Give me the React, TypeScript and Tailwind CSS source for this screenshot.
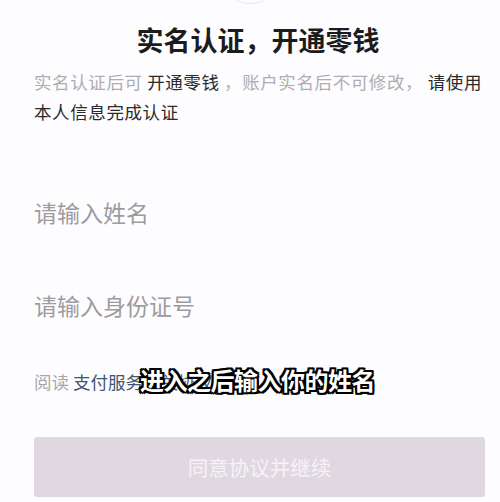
import React from 'react'

const font = { fontFamily: '"Noto Sans CJK SC", "Noto Sans", sans-serif' }

export default function App() {
  return (
    <div className="relative w-[500px] h-[502px] overflow-hidden bg-[#fdfcfe]" style={font}>
      {/* avatar edge peeking from top */}
      <div className="mx-auto mt-[-62px] w-[66px] h-[66px] rounded-full border border-[#ebe8ec] bg-[#fdfcfe]" />

      <div className="px-[34px]">
        <h1 className="mt-[16px] text-center text-[27px] leading-[40px] font-bold text-[#1c1c1c] pl-[16px]">
          实名认证，开通零钱
        </h1>

        <p className="mt-[7px] -mr-[20px] text-[17.5px] leading-[30px] tracking-[0.6px] text-[#b0adb1]">
          实名认证后可 <span className="text-[#2a2a2a]">开通零钱</span> ，账户实名后不可修改，{' '}
          <span className="text-[#2a2a2a]">请使用本人信息完成认证</span>
        </p>

        <div className="mt-[39px] flex flex-col">
          <div className="h-[93px] flex items-center text-[23px] text-[#9d9b9e]">请输入姓名</div>
          <div className="h-[93px] flex items-center text-[23px] text-[#9d9b9e]">请输入身份证号</div>
        </div>

        <div className="mt-[18px] text-[17.5px] leading-[24px]">
          <span className="text-[#a9a6aa]">阅读 </span>
          <span className="text-[#3e5673]">支付服务相关协议</span>
        </div>
      </div>

      <div className="pl-[34px] pr-[15px]">
        <button className="mt-[43px] w-full h-[60px] rounded-[3px] bg-[#e0d8e1] text-[20.5px] text-[#f6f2f6]">
          同意协议并继续
        </button>
      </div>

      {/* video caption overlay */}
      <div className="absolute left-[140px] top-[364px] text-[24px] leading-[32px] font-bold text-white tracking-[-0.5px] [text-shadow:-2px_-2px_0_#000,2px_-2px_0_#000,-2px_2px_0_#000,2px_2px_0_#000,0_2px_0_#000,0_-2px_0_#000,2px_0_0_#000,-2px_0_0_#000]">
        进入之后输入你的姓名
      </div>
    </div>
  )
}
